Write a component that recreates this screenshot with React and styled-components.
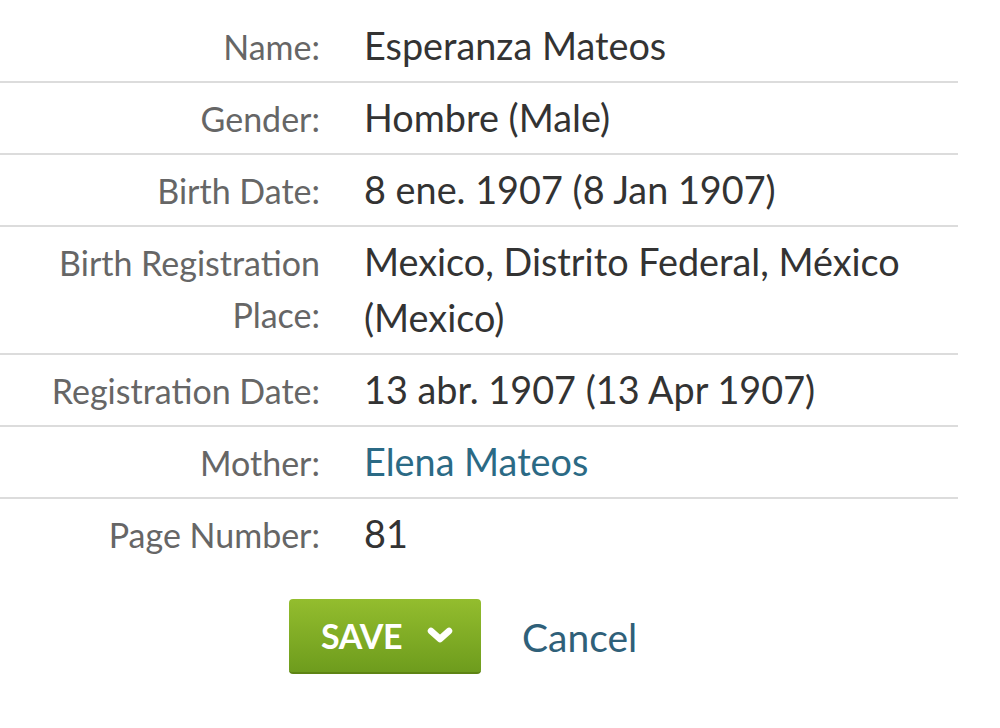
import React from 'react'
import { styled, createGlobalStyle } from 'styled-components'

const GlobalStyle = createGlobalStyle`
body {
  margin: 0;
  background: #fff;
  font-family: Lato, "Open Sans", sans-serif;
}
`;

const Container = styled.div`
width: 958px;
padding-top: 11px;
`;

const Row = styled.div`
display: grid;
grid-template-columns: 320px 1fr;
column-gap: 44px;
padding: 7px 0;
border-bottom: ${props => props.last ? 'none' : '2px solid #dcdcdc'};
`;

const Label = styled.div`
text-align: right;
font-size: 34px;
line-height: 52px;
margin-top: 3px;
color: #666;
`;

const Value = styled.div`
font-size: 37.8px;
line-height: 56px;
color: ${props => props.link ? '#2b6a85' : '#333'};
`;

const Actions = styled.div`
display: flex;
align-items: center;
gap: 41px;
padding-left: 289px;
margin-top: 30px;
`;

const SaveButton = styled.button`
display: flex;
align-items: center;
gap: 24px;
width: 192px;
height: 75px;
padding: 0 0 0 32px;
border: none;
border-bottom: 2px solid #5e8414;
border-radius: 4px;
background: linear-gradient(#93bd2e, #6e9c1d);
color: #fff;
font-family: Lato, sans-serif;
font-weight: 700;
font-size: 34px;
letter-spacing: -0.5px;
cursor: pointer;
`;

const Cancel = styled.a`
font-size: 39px;
color: #2f6079;
text-decoration: none;
cursor: pointer;
`;

const Chevron = () => (
    <svg width="28" height="20" viewBox="0 0 28 20">
        <path d="M5 5 L14 13 L23 5" fill="none" stroke="#fff" strokeWidth="6.5" strokeLinecap="round" strokeLinejoin="round" />
    </svg>
)

const rows = [
    { label: 'Name:', value: 'Esperanza Mateos' },
    { label: 'Gender:', value: 'Hombre (Male)' },
    { label: 'Birth Date:', value: '8 ene. 1907 (8 Jan 1907)' },
    { label: 'Birth Registration Place:', value: 'Mexico, Distrito Federal, México (Mexico)' },
    { label: 'Registration Date:', value: '13 abr. 1907 (13 Apr 1907)' },
    { label: 'Mother:', value: 'Elena Mateos', link: true },
    { label: 'Page Number:', value: '81' },
]

const App = () => {
    return (
        <Container>
            <GlobalStyle />
            {rows.map((r, i) => (
                <Row key={r.label} last={i === rows.length - 1}>
                    <Label>{r.label}</Label>
                    <Value link={r.link}>{r.value}</Value>
                </Row>
            ))}
            <Actions>
                <SaveButton>SAVE <Chevron /></SaveButton>
                <Cancel>Cancel</Cancel>
            </Actions>
        </Container>
    )
}

export default App
